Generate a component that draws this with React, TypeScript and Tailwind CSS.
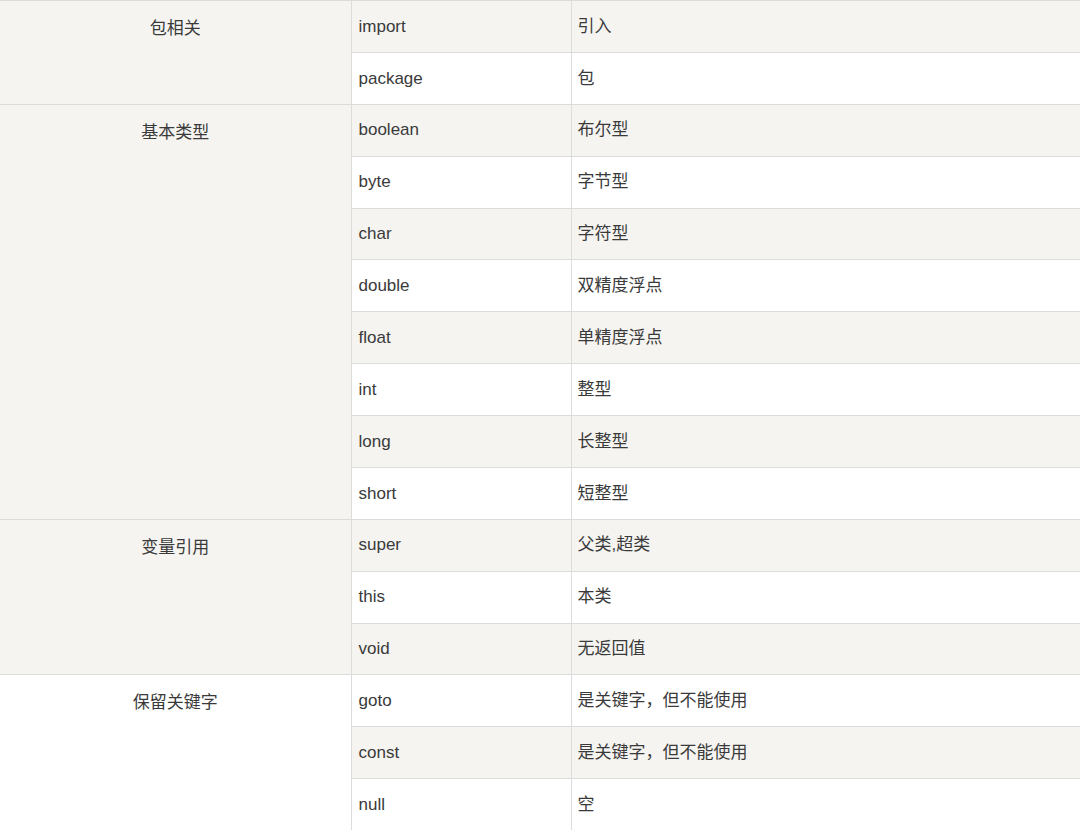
const GROUPS: { name: string; rows: [string, string][] }[] = [
  { name: "包相关", rows: [["import", "引入"], ["package", "包"]] },
  {
    name: "基本类型",
    rows: [
      ["boolean", "布尔型"],
      ["byte", "字节型"],
      ["char", "字符型"],
      ["double", "双精度浮点"],
      ["float", "单精度浮点"],
      ["int", "整型"],
      ["long", "长整型"],
      ["short", "短整型"],
    ],
  },
  { name: "变量引用", rows: [["super", "父类,超类"], ["this", "本类"], ["void", "无返回值"]] },
  {
    name: "保留关键字",
    rows: [
      ["goto", "是关键字，但不能使用"],
      ["const", "是关键字，但不能使用"],
      ["null", "空"],
    ],
  },
];

export default function App() {
  let i = 0;
  return (
    <div
      className="h-[830px] w-[1080px] overflow-hidden bg-white text-[17px] text-[#3a3a3a]"
      style={{ fontFamily: '"Liberation Sans", "Noto Sans CJK SC", sans-serif' }}
    >
      <table className="w-full table-fixed border-collapse">
        <colgroup>
          <col className="w-[351px]" />
          <col className="w-[220px]" />
          <col />
        </colgroup>
        <tbody>
          {GROUPS.map((g) =>
            g.rows.map(([k, v], j) => {
              const bg = i++ % 2 === 0 ? "bg-[#f5f4f1]" : "bg-white";
              return (
                <tr key={k} className={`h-[51.875px] ${bg}`}>
                  {j === 0 && (
                    <td
                      rowSpan={g.rows.length}
                      className="border-y border-[#dcdcdc] pt-[15px] text-center align-top"
                    >
                      {g.name}
                    </td>
                  )}
                  <td className="border border-[#dcdcdc] px-[7px] align-middle">{k}</td>
                  <td className="border-y border-l border-[#dcdcdc] px-[6px] align-middle">{v}</td>
                </tr>
              );
            }),
          )}
        </tbody>
      </table>
    </div>
  );
}
